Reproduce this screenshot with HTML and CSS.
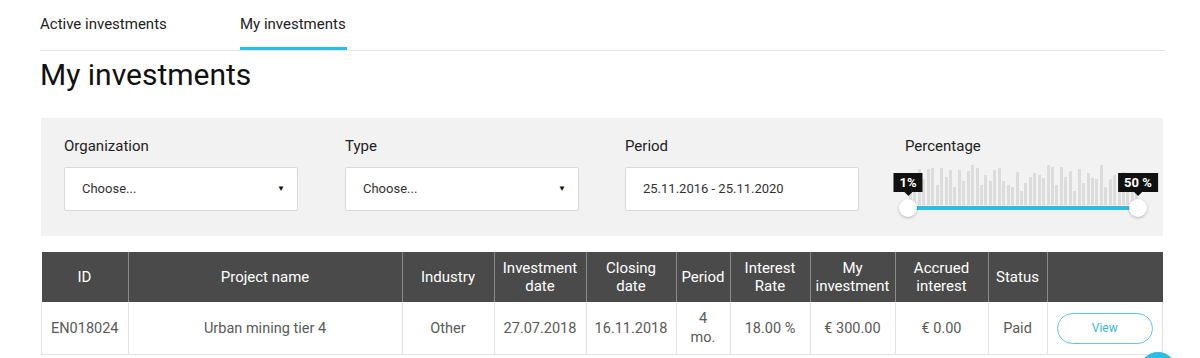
FILE: index.html
```html
<!DOCTYPE html>
<html>
<head>
    <title>My investments</title>
    <link rel="stylesheet" href="styles.css">
</head>
<body>
    <div class="page">
        <div class="tabs">
            <a class="tab">Active investments</a>
            <a class="tab active">My investments</a>
        </div>

        <h1>My investments</h1>

        <div class="filters">
            <div class="field">
                <label>Organization</label>
                <div class="select">Choose...<span class="caret">&#9660;</span></div>
            </div>
            <div class="field">
                <label>Type</label>
                <div class="select">Choose...<span class="caret">&#9660;</span></div>
            </div>
            <div class="field">
                <label>Period</label>
                <div class="select">25.11.2016 - 25.11.2020</div>
            </div>
            <div class="field">
                <label>Percentage</label>
                <div class="range">
                    <div class="bars" id="bars"></div>
                    <div class="track"></div>
                    <div class="thumb left"><span class="tip">1%</span></div>
                    <div class="thumb right"><span class="tip">50 %</span></div>
                </div>
            </div>
        </div>

        <table class="grid">
            <thead>
                <tr>
                    <th class="c-id">ID</th>
                    <th class="c-name">Project name</th>
                    <th class="c-ind">Industry</th>
                    <th class="c-inv">Investment<br>date</th>
                    <th class="c-close">Closing<br>date</th>
                    <th class="c-per">Period</th>
                    <th class="c-rate">Interest<br>Rate</th>
                    <th class="c-my">My<br>investment</th>
                    <th class="c-acc">Accrued<br>interest</th>
                    <th class="c-stat">Status</th>
                    <th class="c-act"></th>
                </tr>
            </thead>
            <tbody>
                <tr>
                    <td>EN018024</td>
                    <td>Urban mining tier 4</td>
                    <td>Other</td>
                    <td>27.07.2018</td>
                    <td>16.11.2018</td>
                    <td>4<br>mo.</td>
                    <td>18.00 %</td>
                    <td>€ 300.00</td>
                    <td>€ 0.00</td>
                    <td>Paid</td>
                    <td><a class="btn-view">View</a></td>
                </tr>
            </tbody>
        </table>
    </div>

    <div class="fab"></div>

    <script>
        // histogram behind the percentage slider
        var heights = [14, 30, 36, 26, 36, 37, 20, 37, 28, 35, 18, 35, 24, 34, 40, 37, 20, 30, 24, 35, 37, 24, 20, 18, 33, 14, 22, 28, 32, 30, 27, 40, 38, 20, 38, 28, 34, 14, 36, 22, 32, 27, 26, 40, 18, 26, 30, 24, 33, 30, 28, 22];
        var bars = document.getElementById('bars');
        heights.forEach(function (h) {
            var b = document.createElement('span');
            b.style.height = h + 'px';
            bars.appendChild(b);
        });
    </script>
</body>
</html>
```

FILE: styles.css
```css
body { margin: 0; font-family: Roboto, "Liberation Sans", sans-serif; color: #222; background: #fff; }
.page { width: 1125px; margin-left: 40px; }

.tabs { display: flex; border-bottom: 1px solid #e4e4e4; height: 50px; }
.tab { font-size: 15px; color: #222; padding-top: 15px; height: 32px; box-sizing: content-box; }
.tab:first-child { width: 200px; }
.tab.active { border-bottom: 3px solid #2bbde6; padding-right: 1px; }

h1 { font-size: 30px; font-weight: 400; margin: 6px 0 0; line-height: 36px; color: #111; }

.filters { display: grid; grid-template-columns: 281px 280px 280px 240px; background: #f2f2f2; margin: 25px 0 0 1px; width: 1122px; box-sizing: border-box; padding: 19px 0 25px 23px; }
.field label { display: block; font-size: 15px; color: #222; line-height: 18px; margin-bottom: 12px; }
.select { position: relative; width: 234px; height: 44px; box-sizing: border-box; background: #fff; border: 1px solid #d9d9d9; border-radius: 2px; font-size: 13px; color: #333; line-height: 42px; padding-left: 17px; }
.caret { position: absolute; right: 12px; top: 0; font-size: 8px; color: #111; }

.range { position: relative; height: 44px; width: 240px; }
.bars { position: absolute; left: 4px; right: 6px; bottom: 6px; display: flex; align-items: flex-end; justify-content: space-between; }
.bars span { width: 3px; background: #dcdcdc; }
.track { position: absolute; left: 3px; right: 8px; top: 39px; height: 4px; background: #2bbde6; }
.thumb { position: absolute; top: 32px; width: 18px; height: 18px; border-radius: 50%; background: #fff; box-shadow: 0 1px 3px rgba(0,0,0,0.25); }
.thumb.left { left: -6px; }
.thumb.right { left: 224px; }
.tip { position: absolute; bottom: 25px; left: 50%; transform: translateX(-50%); background: #111; color: #fff; font-size: 13px; font-weight: 700; line-height: 19px; padding: 0 6px; white-space: nowrap; }
.tip:after { content: ""; position: absolute; left: 50%; bottom: -4px; margin-left: -4px; border: 4px solid transparent; border-bottom: 0; border-top-color: #111; }

.grid { border-collapse: collapse; margin: 16px 0 0 1px; width: 1122px; table-layout: fixed; }
.grid th { background: #4a4a4a; color: #fff; font-weight: 400; font-size: 15px; height: 50px; padding: 0; line-height: 18px; border-left: 1px solid #8a8a8a; }
.grid th:first-child { border-left: none; }
.grid td { height: 52px; padding: 0; text-align: center; color: #5a5a5a; font-size: 14.5px; line-height: 19px; border: 1px solid #e3e3e3; border-top: none; }
.c-id { width: 86px; }
.c-name { width: 273px; }
.c-ind { width: 91px; }
.c-inv { width: 91px; }
.c-close { width: 89px; }
.c-per { width: 53px; }
.c-rate { width: 79px; }
.c-my { width: 84px; }
.c-acc { width: 92px; }
.c-stat { width: 58px; }
.btn-view { display: inline-block; width: 96px; height: 31px; box-sizing: border-box; border: 1px solid #5cc8ea; border-radius: 16px; color: #3bb8e0; font-size: 12px; line-height: 29px; }

.fab { position: fixed; left: 1140px; top: 352px; width: 36px; height: 36px; border-radius: 50%; background: #2bbde6; }
```
